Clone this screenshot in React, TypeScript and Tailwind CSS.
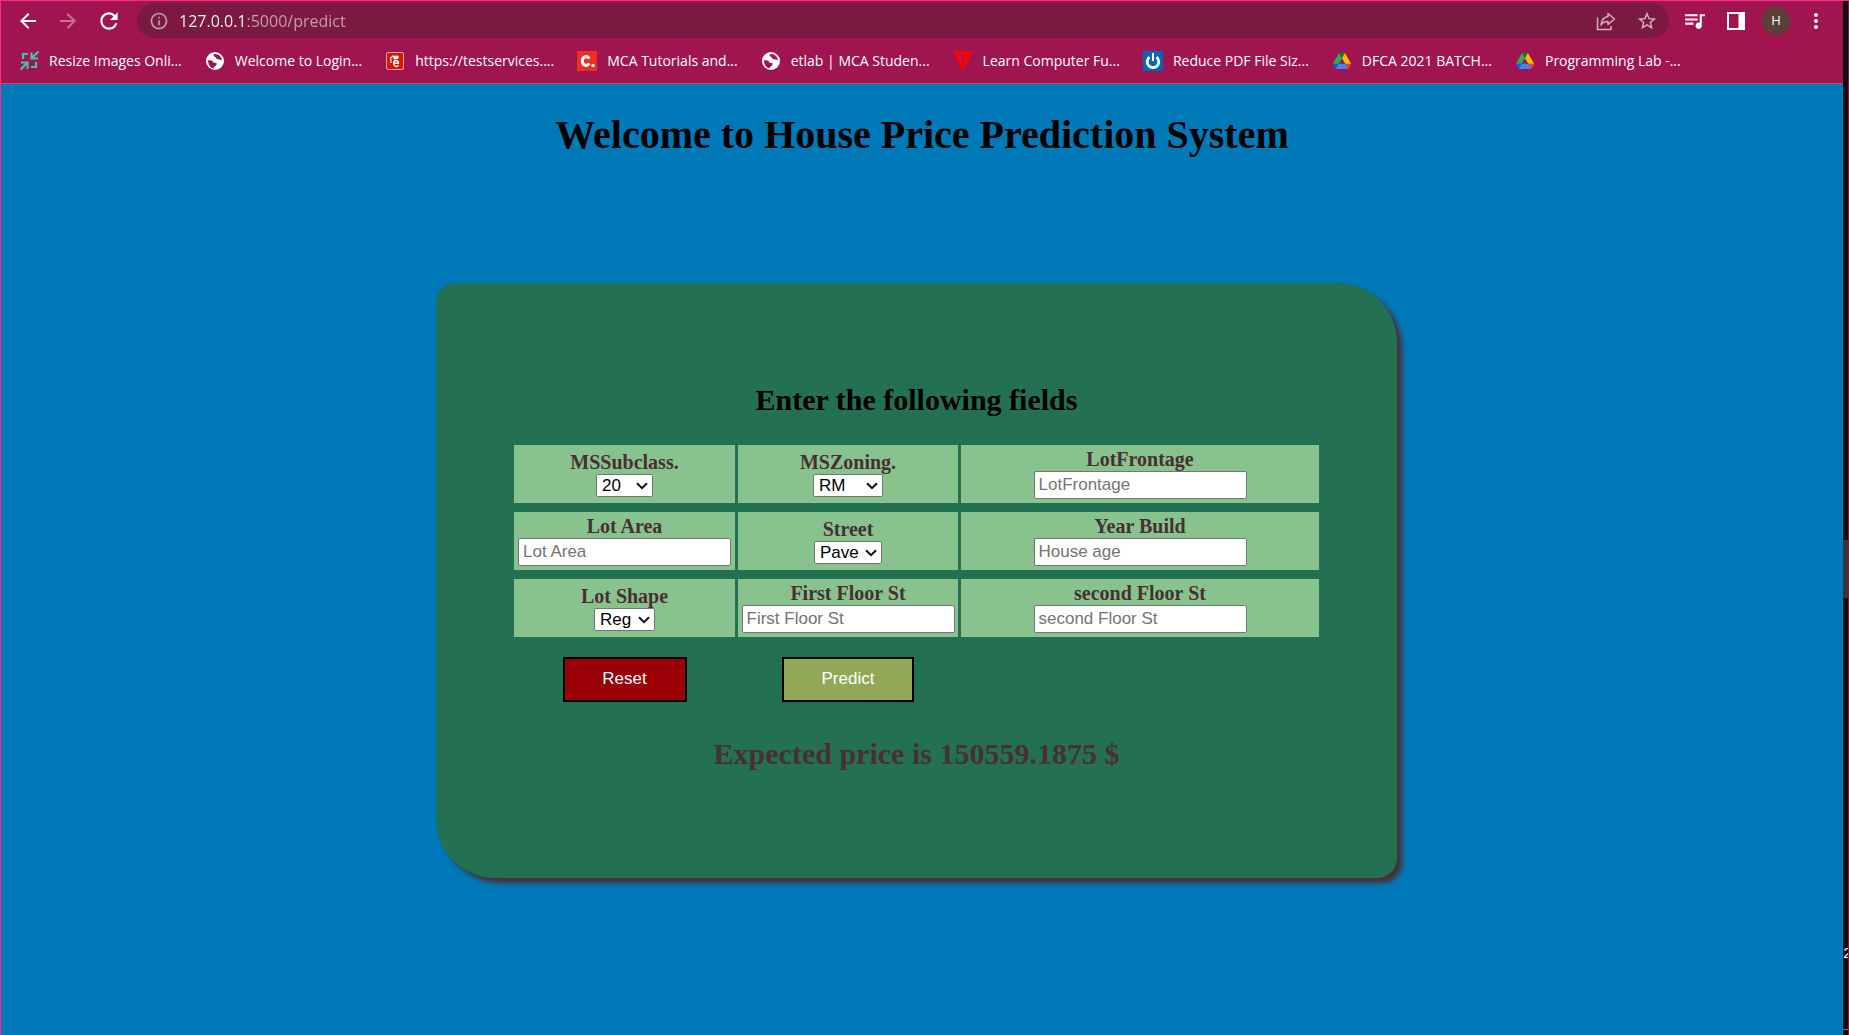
import React from "react";
import {
  MdArrowBack,
  MdArrowForward,
  MdInfoOutline,
  MdMoreVert,
  MdQueueMusic,
  MdRefresh,
  MdStarBorder,
} from "react-icons/md";

function ResizeIcon() {
  return (
    <svg width="19" height="19" viewBox="0 0 19 19" fill="none" stroke="#3fc4ae" strokeWidth="2.200">
      <path d="M3 8V3h5M16 11v5h-5" />
      <path d="M18.500.5 12.500 6.500M11.500 1.500v6h6.500M.5 18.500l6-6M1 11.500h6.500v6.500" />
    </svg>
  );
}

function GlobeIcon() {
  return (
    <svg width="18" height="18" viewBox="0 0 18 18">
      <circle cx="9" cy="9" r="9" fill="#fff" />
      <path
        d="M2 8.400c2.600-.2 4.600.3 5 1.500.4 1 1.900.9 3 1.200 1.200.4.9 2-.3 2.700-.8.6-1.700 1.300-2.200 2.500C4.200 15.600 2 12.500 2 8.400zM8 2.200c-.8 1.400-.2 2.400 1.200 2.700 1.200.3.7 1.600 1.800 2.200 1.400.7 3.200.2 4.900 1.500C16 5 12.800 2 9.200 2z"
        fill="#a0144f"
      />
    </svg>
  );
}

function TestServicesIcon() {
  return (
    <svg width="18" height="18" viewBox="0 0 18 18">
      <rect x=".5" y=".5" width="17" height="17" rx="1.500" fill="#e01208" stroke="#f0a3a8" />
      <path d="M4 6.500 7 4l1.500.5M5 7v4" stroke="#fff" strokeWidth="1.200" fill="none" />
      <path d="M7.600 11.200h4.800c.2-3.400-4.300-3.500-4.700-.3-.3 3.500 3 4.500 4.900 2.400" stroke="#fff" strokeWidth="1.500" fill="none" />
      <path d="M7 5.500c2-2.500 4-2.500 6-1l-1 2.500-4 .5z" fill="#fff" />
    </svg>
  );
}

function LetterCIcon() {
  return (
    <svg width="20" height="20" viewBox="0 0 20 20">
      <rect width="20" height="20" fill="#ee2e24" />
      <path d="M12.200 7.600C10.600 4.500 5.400 5 5.400 10s5.200 5.500 6.800 2.400" stroke="#fff" strokeWidth="3" fill="none" />
      <circle cx="16" cy="14.400" r="1.700" fill="#fff" />
    </svg>
  );
}

function TriangleIcon() {
  return (
    <svg width="20" height="20" viewBox="0 0 20 20">
      <path d="M0 0h20L10 20z" fill="#f80606" />
      <path d="M6 4h8M10 4v10" stroke="#a0144f" strokeWidth="1.600" />
    </svg>
  );
}

function PowerIcon() {
  return (
    <svg width="20" height="20" viewBox="0 0 20 20">
      <rect width="20" height="20" fill="#0467b8" />
      <path d="M6.600 6.200a5.800 5.800 0 1 0 6.800 0" stroke="#fff" strokeWidth="2.800" fill="none" />
      <path d="M10 2v8" stroke="#fff" strokeWidth="2" />
    </svg>
  );
}

function DriveIcon() {
  return (
    <svg width="18" height="16" viewBox="0 0 87.300 78">
      <path d="m6.600 66.850 3.850 6.650c.8 1.400 1.950 2.500 3.300 3.300l13.750-23.800h-27.500c0 1.550.4 3.100 1.200 4.500z" fill="#0066da" />
      <path d="m43.650 25-13.750-23.800c-1.350.8-2.500 1.900-3.300 3.300l-25.400 44a9.060 9.060 0 0 0 -1.200 4.500h27.500z" fill="#34a853" />
      <path d="m73.550 76.800c1.350-.8 2.500-1.900 3.300-3.300l1.600-2.750 7.650-13.250c.8-1.400 1.200-2.950 1.200-4.500h-27.502l5.852 11.500z" fill="#ea4335" />
      <path d="m43.650 25 13.750-23.800c-1.350-.8-2.900-1.200-4.500-1.200h-18.500c-1.600 0-3.150.45-4.500 1.200z" fill="#00832d" />
      <path d="m59.800 53h-32.300l-13.750 23.800c1.350.8 2.900 1.200 4.500 1.200h50.800c1.600 0 3.150-.45 4.500-1.200z" fill="#4285f4" />
      <path d="m73.400 26.500-12.700-22c-.8-1.400-1.950-2.500-3.300-3.300l-13.750 23.800 16.150 28h27.450c0-1.550-.4-3.100-1.200-4.500z" fill="#ffba00" />
    </svg>
  );
}

function ShareIcon() {
  return (
    <svg width="20" height="20" viewBox="0 0 20 20" fill="none" stroke="currentColor" strokeWidth="1.500">
      <path d="M1.500 6.500v12h13.500V15" />
      <path d="M12 2.500 18.500 8 12 13.500V10.500C8.500 10.500 6.500 11.500 5 14c.4-4.500 2.500-7.800 7-8.500z" strokeLinejoin="round" />
    </svg>
  );
}

function SidePanelIcon() {
  return (
    <svg width="18" height="18" viewBox="0 0 18 18" fill="#fff">
      <path fillRule="evenodd" d="M0 0h18v18H0zM2 2v14h9.500v-14z" />
    </svg>
  );
}

const bookmarks = [
  { label: "Resize Images Onli...", icon: <ResizeIcon /> },
  { label: "Welcome to Login...", icon: <GlobeIcon /> },
  { label: "https://testservices....", icon: <TestServicesIcon /> },
  { label: "MCA Tutorials and...", icon: <LetterCIcon /> },
  { label: "etlab | MCA Studen...", icon: <GlobeIcon /> },
  { label: "Learn Computer Fu...", icon: <TriangleIcon /> },
  { label: "Reduce PDF File Siz...", icon: <PowerIcon /> },
  { label: "DFCA 2021 BATCH...", icon: <DriveIcon /> },
  { label: "Programming Lab -...", icon: <DriveIcon /> },
];

function BrowserBar() {
  return (
    <header className="border-b border-[#b8507c] bg-[#a0144f] font-['Open_Sans','Noto_Sans',sans-serif] text-white">
      <div className="flex items-center pt-0.5 pr-[15px] pl-[15px]">
        <button aria-label="Back" className="mr-4"><MdArrowBack size={24} /></button>
        <button aria-label="Forward" className="mr-4 text-[#cc6f97]"><MdArrowForward size={24} /></button>
        <button aria-label="Reload" className="mr-[15px]"><MdRefresh size={26} /></button>
        <div className="flex h-[35px] grow items-center rounded-full bg-[#7b1941] pr-[11px] pl-3 text-[#cfb3c0]">
          <MdInfoOutline size={20} className="text-[#b9a0ac]" />
          <input
            aria-label="Address"
            defaultValue="127.0.0.1:5000/predict"
            className="ml-2.5 min-w-0 grow bg-linear-to-r from-white from-[64px] to-[#c8a3b3] to-[64px] bg-clip-text text-base leading-6 text-transparent outline-none"
          />
          <button aria-label="Share" className="mr-5"><ShareIcon /></button>
          <button aria-label="Bookmark"><MdStarBorder size={22} /></button>
        </div>
        <button aria-label="Media" className="ml-[13px]"><MdQueueMusic size={25} /></button>
        <button aria-label="Side panel" className="ml-5"><SidePanelIcon /></button>
        <button aria-label="Profile" className="ml-[17px] size-7 rounded-full bg-[#5b4037] text-[13px]">H</button>
        <button aria-label="Menu" className="ml-3.5"><MdMoreVert size={24} /></button>
      </div>
      <nav className="flex h-[45px] items-center gap-[23px] pl-[18px]">
        {bookmarks.map((b) => (
          <a key={b.label} href="#" className="flex items-center gap-2.5 text-[14px] whitespace-nowrap">
            <span className="flex w-5 justify-center">{b.icon}</span>
            {b.label}
          </a>
        ))}
      </nav>
    </header>
  );
}

const controlText = "font-['Liberation_Sans',Arial,sans-serif] text-[17px]";

function Cell({ id, label, children }: { id: string; label: string; children: React.ReactNode }) {
  return (
    <div className="flex h-[58px] flex-col items-center justify-center bg-[#88c38e]">
      <label htmlFor={id} className="text-xl leading-[23px] font-bold text-[#482f33]">{label}</label>
      {children}
    </div>
  );
}

function TextField({ id, label, placeholder }: { id: string; label: string; placeholder: string }) {
  return (
    <Cell id={id} label={label}>
      <input
        id={id}
        placeholder={placeholder}
        className={`${controlText} mb-px h-7 w-[213px] rounded-xs border border-[#767676] bg-white px-1 text-black placeholder:text-[#757575]`}
      />
    </Cell>
  );
}

function SelectField({ id, label, options, width }: { id: string; label: string; options: string[]; width: string }) {
  return (
    <Cell id={id} label={label}>
      <div className={`relative ${width}`}>
        <select
          id={id}
          className={`${controlText} block h-[23px] w-full appearance-none rounded-xs border border-[#767676] bg-white pl-[5px] leading-5 text-black`}
        >
          {options.map((o) => (
            <option key={o}>{o}</option>
          ))}
        </select>
        <svg className="pointer-events-none absolute top-2 right-[5px]" width="12" height="8" viewBox="0 0 12 8" fill="none" stroke="#111" strokeWidth="2">
          <path d="M1 1.200 6 6.200 11 1.200" />
        </svg>
      </div>
    </Cell>
  );
}

export default function App() {
  return (
    <div className="flex min-h-screen border-t border-l border-[#ff2a86] bg-[#0079b8]">
      <div className="flex min-w-0 grow flex-col">
        <BrowserBar />
        <main className="flex grow flex-col items-center font-['Liberation_Serif','Times_New_Roman',serif]">
          <h1 className="mt-7 text-[40px] leading-[46px] font-bold text-black">
            Welcome to House Price Prediction System
          </h1>
          <form
            onSubmit={(e) => e.preventDefault()}
            className="mt-[125px] mr-[11px] w-full max-w-[961px] rounded-tl-[20px] rounded-tr-[60px] rounded-br-[20px] rounded-bl-[60px] bg-[#237053] px-[78px] pt-[99px] pb-[107px] shadow-[5px_5px_5px_#482f33]"
          >
            <h2 className="text-center text-3xl leading-[35px] font-bold text-black">
              Enter the following fields
            </h2>
            <div className="mt-7 grid grid-cols-[221fr_220fr_358fr] gap-x-[3px] gap-y-[9px]">
              <SelectField id="subclass" label="MSSubclass." options={["20", "30", "190"]} width="w-[57px]" />
              <SelectField id="zoning" label="MSZoning." options={["RM", "RL"]} width="w-[70px]" />
              <TextField id="frontage" label="LotFrontage" placeholder="LotFrontage" />
              <TextField id="area" label="Lot Area" placeholder="Lot Area" />
              <SelectField id="street" label="Street" options={["Pave", "Grvl"]} width="w-[68px]" />
              <TextField id="year" label="Year Build" placeholder="House age" />
              <SelectField id="shape" label="Lot Shape" options={["Reg", "IR1"]} width="w-[61px]" />
              <TextField id="first" label="First Floor St" placeholder="First Floor St" />
              <TextField id="second" label="second Floor St" placeholder="second Floor St" />
            </div>
            <div className="mt-5 grid grid-cols-[221fr_220fr_358fr] justify-items-center gap-x-[3px]">
              <button type="reset" className={`${controlText} h-[45px] w-[124px] border-2 border-black bg-[#9a0006] pb-0.5 text-white`}>
                Reset
              </button>
              <button type="submit" className={`${controlText} h-[45px] w-[132px] border-2 border-black bg-[#91a956] pb-0.5 text-white`}>
                Predict
              </button>
            </div>
            <p className="mt-[34px] text-center text-3xl leading-[35px] font-bold text-[#482f33]">
              Expected price is 150559.1875 $
            </p>
          </form>
        </main>
      </div>
      <aside className="flex w-1.5 flex-col overflow-hidden border-r border-[#7b1941] bg-[#101010]">
        <div className="mt-[539px] h-[58px] shrink-0 bg-[#353535]" />
        <span className="mt-[345px] font-['Liberation_Mono',monospace] text-[15px] leading-6 text-white">2</span>
        <div className="mt-auto mb-[5px] h-px bg-[#777]" />
      </aside>
    </div>
  );
}
